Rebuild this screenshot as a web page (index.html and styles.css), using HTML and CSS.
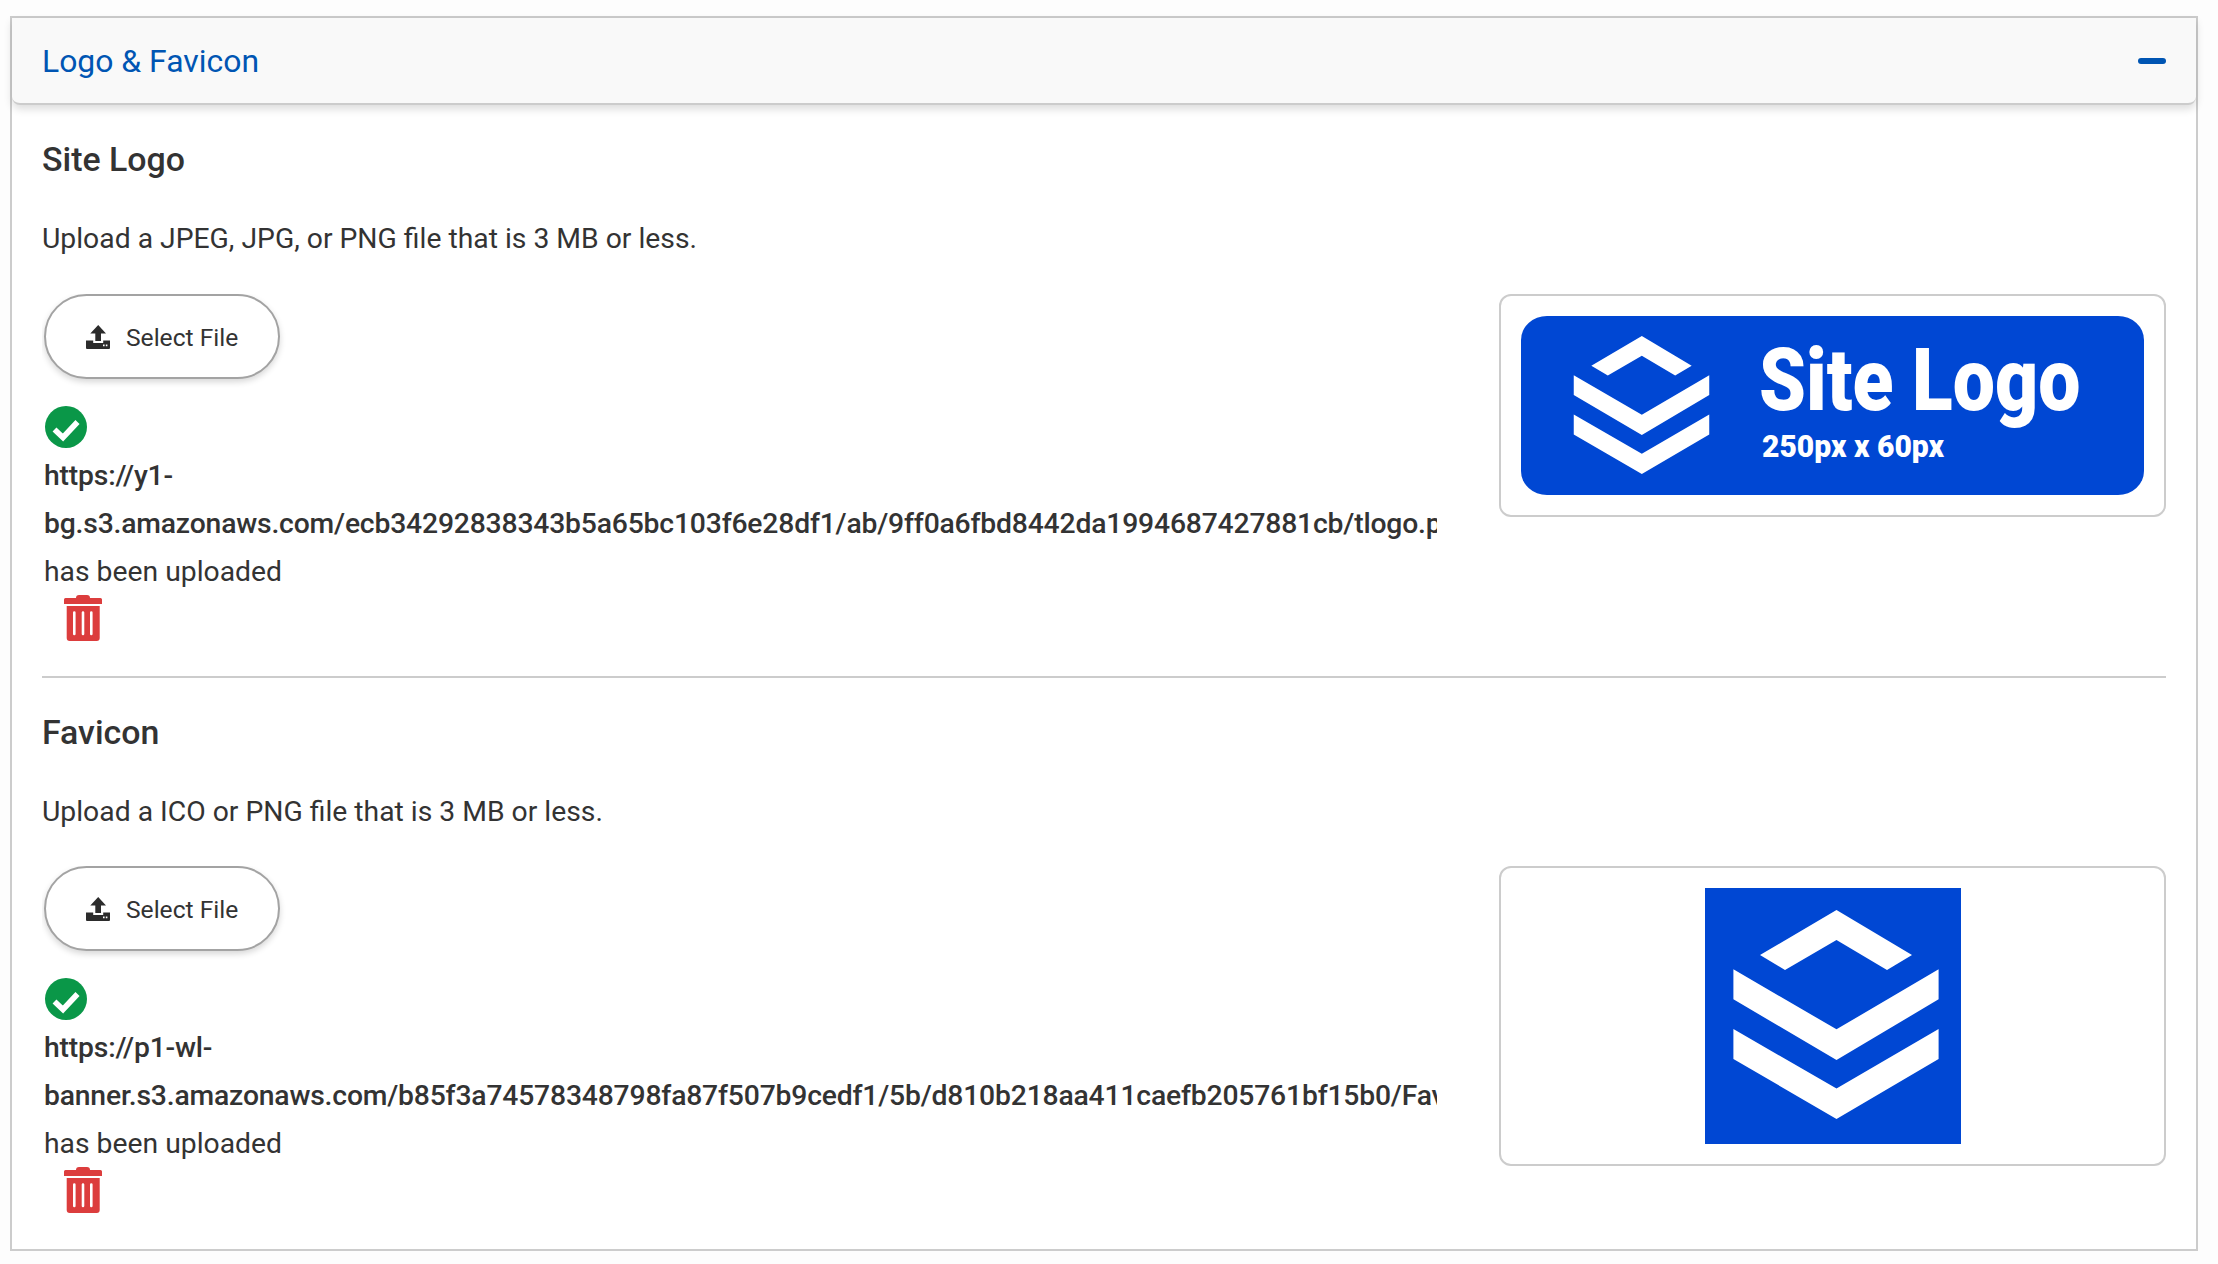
FILE: index.html
```html
<!DOCTYPE html>
<html lang="en">
<head>
    <meta charset="UTF-8">
    <meta name="viewport" content="width=device-width, initial-scale=1.0">
    <title>Logo &amp; Favicon</title>
    <link rel="stylesheet" href="styles.css">
</head>
<body>

    <svg class="defs" width="0" height="0" aria-hidden="true">
        <symbol id="marca" viewBox="28 22 206 209">
            <polygon points="131.5,22 207,67 182,82 131.5,52 80,82 55,67"/>
            <polygon points="28.4,81.3 131.5,141.3 233.6,81.3 233.6,111.3 131.5,172 28.4,111.3"/>
            <polygon points="28.4,141 131.5,200.5 233.6,141 233.6,171 131.5,231 28.4,171"/>
        </symbol>
        <symbol id="upload" viewBox="0 0 24 24">
            <path d="M12.2 0 20 8.5h-5V16H9.3V8.5h-5z"/>
            <path fill-rule="evenodd" d="M0 15.5h7.2V18h10v-2.5H24V23a1 1 0 0 1-1 1H1a1 1 0 0 1-1-1zM17 19.6v1.6h1.6v-1.6zM19.8 19.6v1.6h1.6v-1.6z"/>
        </symbol>
        <symbol id="check" viewBox="0 0 42 42">
            <circle cx="21" cy="21" r="21" fill="#0a9748"/>
            <path d="M9.5 23.5 18 31.5 32.5 16" fill="none" stroke="#fff" stroke-width="5.6"/>
        </symbol>
        <symbol id="lixeira" viewBox="0 0 38 46">
            <path fill="#dc3d3d" d="M12 3a3 3 0 0 1 3-3h8a3 3 0 0 1 3 3h10.500a1.500 1.500 0 0 1 1.500 1.500V9H0V4.500A1.500 1.500 0 0 1 1.500 3z"/>
            <path fill="#dc3d3d" fill-rule="evenodd" d="M2.700 11h33v32a3 3 0 0 1-3 3h-27a3 3 0 0 1-3-3zM9 17.500v21.500a1.300 1.300 0 0 0 2.600 0V17.500a1.300 1.300 0 0 0-2.600 0zM17.700 17.500v21.500a1.300 1.300 0 0 0 2.600 0V17.500a1.300 1.300 0 0 0-2.600 0zM26 17.500v21.500a1.300 1.300 0 0 0 2.600 0V17.500a1.300 1.300 0 0 0-2.600 0z"/>
        </symbol>
    </svg>

    <div class="painel">
        <div class="painel-topo">
            <span class="painel-titulo">Logo &amp; Favicon</span>
            <span class="recolher"></span>
        </div>

        <div class="painel-corpo">
            <section class="bloco">
                <h2>Site Logo</h2>
                <p class="dica">Upload a JPEG, JPG, or PNG file that is 3 MB or less.</p>
                <div class="bloco-linha">
                    <div class="envio">
                        <button class="botao-arquivo" type="button">
                            <svg class="icone-upload"><use href="#upload"/></svg>
                            Select File
                        </button>
                        <svg class="icone-ok"><use href="#check"/></svg>
                        <div class="arquivo-url">https://y1-bg.s3.amazonaws.com/ecb34292838343b5a65bc103f6e28df1/ab/9ff0a6fbd8442da1994687427881cb/tlogo.png</div>
                        <div class="arquivo-status">has been uploaded</div>
                        <svg class="icone-lixeira"><use href="#lixeira"/></svg>
                    </div>
                    <div class="previa previa-logo">
                        <div class="logo-site">
                            <svg class="logo-marca"><use href="#marca"/></svg>
                            <div class="logo-textos">
                                <div class="logo-nome">Site Logo</div>
                                <div class="logo-medida">250px x 60px</div>
                            </div>
                        </div>
                    </div>
                </div>
            </section>

            <section class="bloco">
                <h2>Favicon</h2>
                <p class="dica">Upload a ICO or PNG file that is 3 MB or less.</p>
                <div class="bloco-linha">
                    <div class="envio">
                        <button class="botao-arquivo" type="button">
                            <svg class="icone-upload"><use href="#upload"/></svg>
                            Select File
                        </button>
                        <svg class="icone-ok"><use href="#check"/></svg>
                        <div class="arquivo-url">https://p1-wl-banner.s3.amazonaws.com/b85f3a74578348798fa87f507b9cedf1/5b/d810b218aa411caefb205761bf15b0/Favicon.png</div>
                        <div class="arquivo-status">has been uploaded</div>
                        <svg class="icone-lixeira"><use href="#lixeira"/></svg>
                    </div>
                    <div class="previa previa-favicon">
                        <div class="favicon-img">
                            <svg class="favicon-marca"><use href="#marca"/></svg>
                        </div>
                    </div>
                </div>
            </section>
        </div>
    </div>

</body>
</html>
```

FILE: styles.css
```css
body {
    font-family: Roboto, "Liberation Sans", sans-serif;
    background-color: #fdfdfd;
    color: #333;
    margin: 0;
    padding: 16px 20px 0 10px;
}

.defs {
    display: block;
    height: 0;
}

.painel {
    border: 2px solid #ccc;
    background-color: #fff;
    height: 1235px;
    box-sizing: border-box;
}

.painel-topo {
    display: flex;
    align-items: center;
    justify-content: space-between;
    height: 87px;
    padding: 0 30px 0 30px;
    background-color: #f9f9f9;
    border-bottom: 2px solid #ccc;
    border-radius: 0 0 8px 8px;
    box-sizing: border-box;
    box-shadow: 0 4px 8px rgba(0, 0, 0, 0.14);
}

.painel-titulo {
    font-size: 31.9px;
    color: #0055b3;
}

.recolher {
    width: 28px;
    height: 6px;
    border-radius: 3px;
    background-color: #0055b3;
}

.painel-corpo {
    padding: 0 30px 0 30px;
}

.bloco {
    height: 573px;
    box-sizing: border-box;
    padding-top: 35px;
}

.bloco:first-child {
    border-bottom: 2px solid #ccc;
}

h2 {
    font-size: 33.9px;
    font-weight: 500;
    line-height: 40px;
    margin: 0;
}

.dica {
    font-size: 28.3px;
    line-height: 40px;
    margin: 39px 0 0 0;
}

.bloco-linha {
    display: flex;
    justify-content: space-between;
    align-items: flex-start;
    margin-top: 35px;
}

.bloco + .bloco .bloco-linha {
    margin-top: 34px;
}

.envio {
    width: 1395px;
    padding-left: 2px;
    box-sizing: border-box;
    overflow: hidden;
    display: flex;
    flex-direction: column;
    align-items: flex-start;
}

.botao-arquivo {
    display: flex;
    align-items: center;
    gap: 16px;
    width: 236px;
    height: 85px;
    padding: 1px 0 0 40px;
    margin: 0 0 2px 0;
    box-sizing: border-box;
    border: 2px solid #a3a3a3;
    border-radius: 43px;
    background-color: #fff;
    box-shadow: 0 3px 6px rgba(0, 0, 0, 0.16);
    font-family: inherit;
    font-size: 24.6px;
    color: #333;
}

.icone-upload {
    width: 24px;
    height: 24px;
    fill: #2c2c2c;
}

.icone-ok {
    width: 42px;
    height: 42px;
    margin: 25px 0 0 1px;
}

.arquivo-url {
    font-size: 28.3px;
    font-weight: 500;
    letter-spacing: -0.18px;
    line-height: 48px;
    margin-top: 4px;
}

.arquivo-status {
    font-size: 28.3px;
    line-height: 48px;
}

.icone-lixeira {
    width: 38px;
    height: 46px;
    margin: -1px 0 0 20px;
}

.previa {
    width: 667px;
    box-sizing: border-box;
    border: 2px solid #ccc;
    border-radius: 12px;
    background-color: #fff;
    display: flex;
    justify-content: center;
    align-items: center;
}

.previa-logo {
    height: 223px;
}

.previa-favicon {
    height: 300px;
}

.logo-site {
    width: 623px;
    height: 179px;
    border-radius: 26px / 24px;
    background-color: #0047d3;
    color: #fff;
    display: flex;
    align-items: flex-start;
    box-sizing: border-box;
    padding: 20px 0 0 52px;
    gap: 49px;
}

.logo-marca {
    width: 137px;
    height: 138px;
    fill: #fff;
}

.logo-textos {
    font-weight: 900;
}

.logo-nome {
    font-size: 87px;
    line-height: 80px;
    margin-top: 4px;
    transform: scaleX(0.863);
    transform-origin: left center;
    white-space: nowrap;
}

.logo-medida {
    font-size: 32px;
    line-height: 36px;
    margin: 8px 0 0 3px;
    transform: scaleX(0.94);
    transform-origin: left center;
    white-space: nowrap;
}

.favicon-img {
    width: 256px;
    height: 256px;
    background-color: #0047d3;
    box-sizing: border-box;
    padding: 22px 0 0 28px;
}

.favicon-marca {
    display: block;
    width: 206px;
    height: 209px;
    fill: #fff;
}
```
